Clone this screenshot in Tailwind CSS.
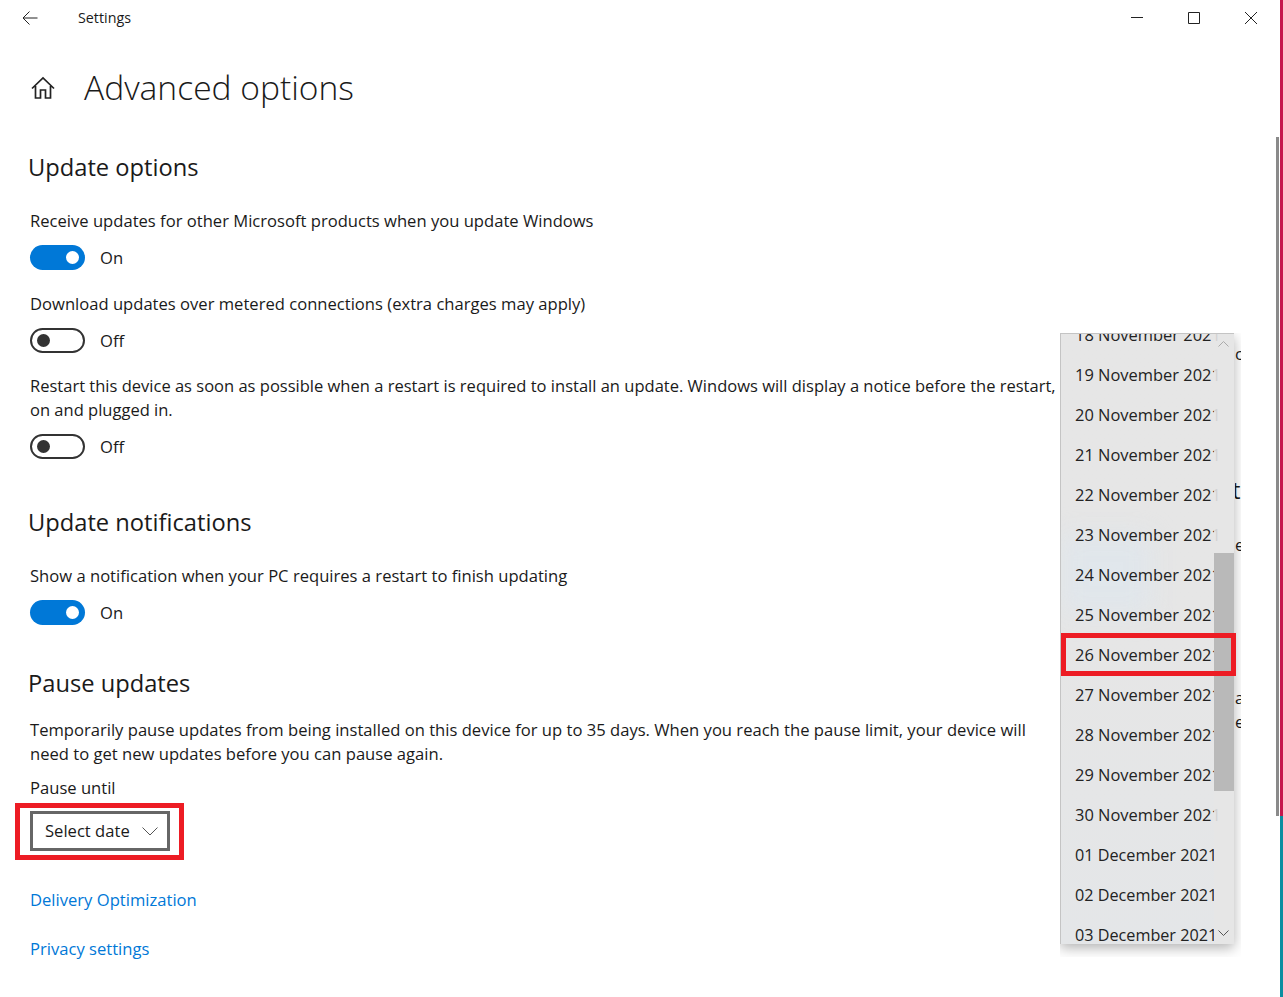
<!DOCTYPE html>
<html lang="en">
<head>
  <meta charset="UTF-8" />
  <title>Settings</title>
  <script src="https://cdn.jsdelivr.net/npm/@tailwindcss/browser@4"></script>
</head>
<body class="bg-white">
  <div class="relative w-[1283px] h-[997px] overflow-hidden bg-white font-['Open_Sans','Noto_Sans',sans-serif] text-[#1a1a1a]">

    <!-- title bar -->
    <header class="flex items-center h-[36px] pl-[22px] pr-[26px] text-[14.3px]">
      <svg class="w-4 h-4" viewBox="0 0 16 16" fill="none" stroke="#222" stroke-width="1"><path d="M15.5 8H1M7.5 1.5 1 8l6.5 6.5"/></svg>
      <span class="ml-[40px]">Settings</span>
      <div class="ml-auto flex items-center gap-[45px]">
        <svg class="w-3 h-3" viewBox="0 0 12 12" fill="none" stroke="#222" stroke-width="1"><path d="M0 5.5h12"/></svg>
        <svg class="w-3 h-3" viewBox="0 0 12 12" fill="none" stroke="#222" stroke-width="1"><path d="M.5.5h11v11H.5z"/></svg>
        <svg class="w-3 h-3" viewBox="0 0 12 12" fill="none" stroke="#222" stroke-width="1"><path d="M0 0l12 12M12 0 0 12"/></svg>
      </div>
    </header>

    <main class="pl-[30px] w-[1060px] text-[16.6px] leading-[24px]">
      <div class="flex items-center mt-[30px] h-[44px]">
        <svg class="w-[26px] h-[26px]" viewBox="0 0 26 26" fill="none" stroke="#222" stroke-width="1.7"><path d="M2 13.5 13 3l11 10.5M5.5 11v12h5v-8h5v8h5V11"/></svg>
        <h1 class="ml-[28px] pb-[2px] text-[33.6px] font-light">Advanced options</h1>
      </div>

      <h2 class="text-[23.7px] leading-[32px] mt-[41px] -ml-[2px]">Update options</h2>
      <p class="mt-[26px]">Receive updates for other Microsoft products when you update Windows</p>
      <div class="flex items-center gap-[15px] mt-[12px] h-[25px]">
        <span class="flex items-center justify-end w-[55px] h-[25px] pr-[6px] rounded-full bg-[#0078d7]"><span class="w-[13px] h-[13px] rounded-full bg-white"></span></span>On
      </div>

      <p class="mt-[22px]">Download updates over metered connections (extra charges may apply)</p>
      <div class="flex items-center gap-[15px] mt-[12px] h-[25px]">
        <span class="flex items-center w-[55px] h-[25px] pl-[5px] rounded-full border-2 border-[#333]"><span class="w-[13px] h-[13px] rounded-full bg-[#333]"></span></span>Off
      </div>

      <p class="mt-[21px] w-[1040px] whitespace-nowrap text-[16.52px]">Restart this device as soon as possible when a restart is required to install an update. Windows will display a notice before the restart,<br>on and plugged in.</p>
      <div class="flex items-center gap-[15px] mt-[12px] h-[25px]">
        <span class="flex items-center w-[55px] h-[25px] pl-[5px] rounded-full border-2 border-[#333]"><span class="w-[13px] h-[13px] rounded-full bg-[#333]"></span></span>Off
      </div>

      <h2 class="text-[23.7px] leading-[32px] mt-[47px] -ml-[2px]">Update notifications</h2>
      <p class="mt-[26px]">Show a notification when your PC requires a restart to finish updating</p>
      <div class="flex items-center gap-[15px] mt-[12px] h-[25px]">
        <span class="flex items-center justify-end w-[55px] h-[25px] pr-[6px] rounded-full bg-[#0078d7]"><span class="w-[13px] h-[13px] rounded-full bg-white"></span></span>On
      </div>

      <h2 class="text-[23.7px] leading-[32px] mt-[42px] -ml-[2px]">Pause updates</h2>
      <p class="mt-[19px] whitespace-nowrap">Temporarily pause updates from being installed on this device for up to 35 days. When you reach the pause limit, your device will<br>need to get new updates before you can pause again.</p>
      <p class="mt-[10px]">Pause until</p>
      <div class="flex items-center justify-between w-[140px] h-[40px] mt-[11px] pl-[12px] pr-[9px] border-[3px] border-[#666]">
        Select date
        <svg class="w-4 h-[9px]" viewBox="0 0 16 9" fill="none" stroke="#555" stroke-width="1"><path d="M.5.5 8 8 15.5.5"/></svg>
      </div>
      <a class="block mt-[37px] text-[#0078d7]">Delivery Optimization</a>
      <a class="block mt-[25px] text-[#0078d7]">Privacy settings</a>
    </main>

    <!-- annotation round the date box -->
    <div class="absolute left-[15px] top-[803px] w-[169px] h-[57px] border-[5px] border-[#ed1c24]"></div>

    <!-- text of the page that shows beside the dropdown -->
    <div class="absolute left-[1235px] top-[320px] w-[6px] h-[420px] overflow-hidden text-[16.6px] leading-[24px]">
      <span class="absolute left-0 top-[22px]">c</span>
      <span class="absolute -left-[3px] top-[154px] text-[23.7px] leading-[32px]">ti</span>
      <span class="absolute left-0 top-[213px]">e</span>
      <span class="absolute left-0 top-[366px]">a</span>
      <span class="absolute -left-[6px] top-[390px]">te</span>
    </div>

    <!-- dropdown list -->
    <div class="absolute left-[1060px] top-[333px] w-[181px] h-[624px] overflow-hidden">
      <div class="relative w-[174px] h-[611px] overflow-hidden bg-linear-to-b from-[#e6e6e6] via-[#e6e6e6] to-[#e4e6e8] border-l border-t border-[#c4c4c4] shadow-[0_4px_12px_rgba(0,0,0,0.3)] text-[16.45px] text-[#222]">
        <div class="absolute left-0 top-[200px] w-[90px] h-[80px] bg-[#dce8f2]/50 blur-md"></div>
        <ul class="relative -mt-[19px] pl-[14px] whitespace-nowrap">
          <li class="flex items-center h-[40px]">18 November 2021</li>
          <li class="flex items-center h-[40px]">19 November 2021</li>
          <li class="flex items-center h-[40px]">20 November 2021</li>
          <li class="flex items-center h-[40px]">21 November 2021</li>
          <li class="flex items-center h-[40px]">22 November 2021</li>
          <li class="flex items-center h-[40px]">23 November 2021</li>
          <li class="flex items-center h-[40px]">24 November 2021</li>
          <li class="flex items-center h-[40px]">25 November 2021</li>
          <li class="flex items-center h-[40px]">26 November 2021</li>
          <li class="flex items-center h-[40px]">27 November 2021</li>
          <li class="flex items-center h-[40px]">28 November 2021</li>
          <li class="flex items-center h-[40px]">29 November 2021</li>
          <li class="flex items-center h-[40px]">30 November 2021</li>
          <li class="flex items-center h-[40px] text-[16.2px]">01 December 2021</li>
          <li class="flex items-center h-[40px] text-[16.2px]">02 December 2021</li>
          <li class="flex items-center h-[40px] text-[16.2px]">03 December 2021</li>
        </ul>
        <!-- scrollbar -->
        <div class="absolute right-0 top-0 bottom-0 w-[20px] bg-[#e6e6e6]/90">
          <svg class="absolute left-[4px] top-[7px] w-[11px] h-[6px]" viewBox="0 0 11 6" fill="none" stroke="#aaa" stroke-width="1"><path d="M.5 5.5l5-5 5 5"/></svg>
          <div class="absolute left-0 top-[219px] w-[20px] h-[238px] bg-[#b9b9b9]"></div>
          <svg class="absolute left-[4px] bottom-[8px] w-[11px] h-[6px]" viewBox="0 0 11 6" fill="none" stroke="#555" stroke-width="1"><path d="M.5.5l5 5 5-5"/></svg>
        </div>
      </div>
    </div>

    <!-- annotation round 26 November -->
    <div class="absolute left-[1061px] top-[633px] w-[175px] h-[43px] border-[5px] border-[#ed1c24]"></div>

    <!-- window scrollbar and the desktop behind the window -->
    <div class="absolute left-[1276px] top-[137px] w-[3px] h-[679px] bg-[#8a8a8a]"></div>
    <div class="absolute left-[1280px] top-0 w-[3px] h-[816px] bg-[#c5174c]"></div>
    <div class="absolute left-[1280px] top-[816px] w-[3px] h-[181px] bg-[#0a8ea0]"></div>
  </div>
</body>
</html>
